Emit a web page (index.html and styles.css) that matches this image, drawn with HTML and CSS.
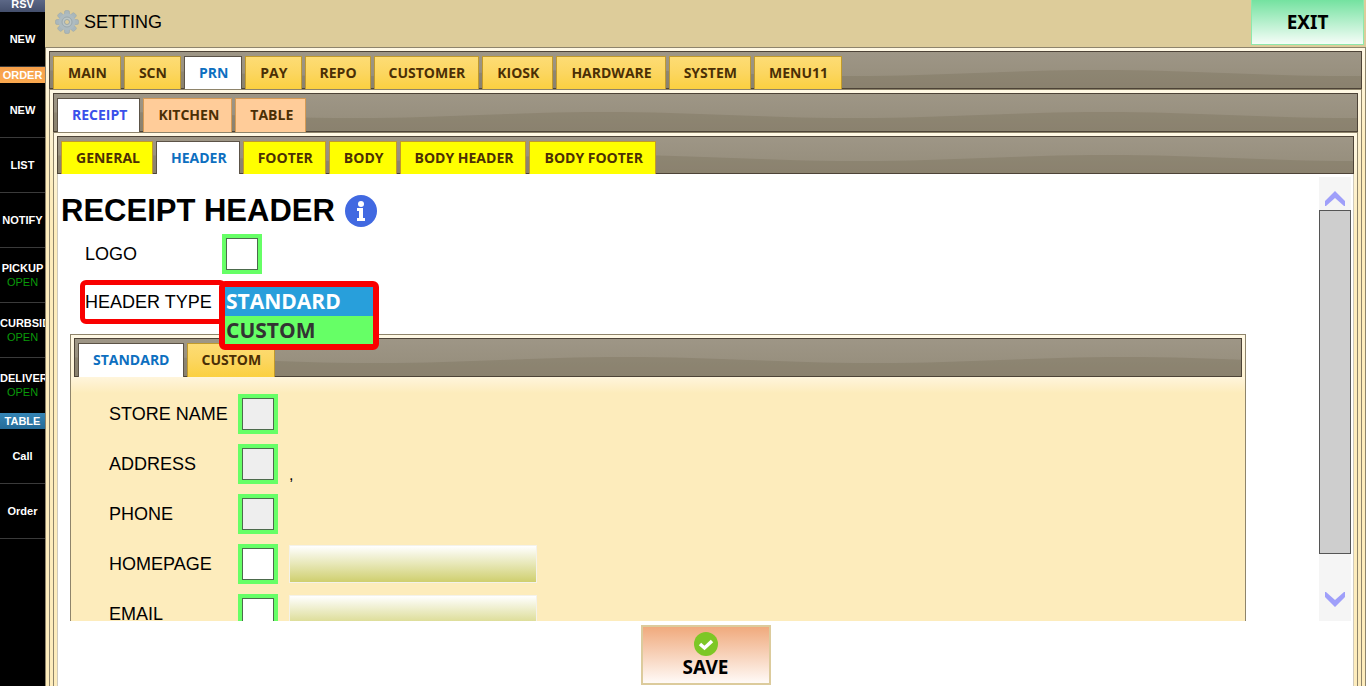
FILE: index.html
```
<!DOCTYPE html>
<html lang="en">
<head>
  <meta charset="utf-8">
  <title>Setting</title>
  <link rel="stylesheet" href="styles.css">
</head>
<body>

  <!-- Left menu -->
  <nav class="sidebar">
    <div class="side-label rsv">RSV</div>
    <button class="side-item">NEW</button>
    <div class="side-label order">ORDER</div>
    <button class="side-item">NEW</button>
    <button class="side-item">LIST</button>
    <button class="side-item">NOTIFY</button>
    <button class="side-item">PICKUP<span class="open">OPEN</span></button>
    <button class="side-item">CURBSIDE<span class="open">OPEN</span></button>
    <button class="side-item last">DELIVERY<span class="open">OPEN</span></button>
    <div class="side-label table">TABLE</div>
    <button class="side-item">Call</button>
    <button class="side-item">Order</button>
  </nav>

  <main class="main">
    <header class="topbar">
      <svg class="gear" viewBox="0 0 24 24">
        <g fill="#a9b7bc" stroke="#93a3aa" stroke-width="0.5">
          <rect x="9.5" y="0.5" width="5" height="23" rx="1.5"/>
          <rect x="9.5" y="0.5" width="5" height="23" rx="1.5" transform="rotate(45 12 12)"/>
          <rect x="9.5" y="0.5" width="5" height="23" rx="1.5" transform="rotate(90 12 12)"/>
          <rect x="9.5" y="0.5" width="5" height="23" rx="1.5" transform="rotate(135 12 12)"/>
        </g>
        <circle cx="12" cy="12" r="8.5" fill="#aebbc0"/>
        <circle cx="12" cy="12" r="5" fill="#bcc6c6" stroke="#9aa8ad"/>
        <circle cx="12" cy="12" r="2.5" fill="#ddcc9a" stroke="#9aa8ad"/>
      </svg>
      <h1>SETTING</h1>
      <button class="exit">EXIT</button>
    </header>

    <section class="panel">
      <div class="tabs">
        <button class="tab">MAIN</button>
        <button class="tab">SCN</button>
        <button class="tab active">PRN</button>
        <button class="tab">PAY</button>
        <button class="tab">REPO</button>
        <button class="tab">CUSTOMER</button>
        <button class="tab">KIOSK</button>
        <button class="tab">HARDWARE</button>
        <button class="tab">SYSTEM</button>
        <button class="tab">MENU11</button>
      </div>

      <section class="panel">
        <div class="tabs tabs-receipt">
          <button class="tab active">RECEIPT</button>
          <button class="tab">KITCHEN</button>
          <button class="tab">TABLE</button>
        </div>

        <section class="panel">
          <div class="tabs tabs-section">
            <button class="tab">GENERAL</button>
            <button class="tab active">HEADER</button>
            <button class="tab">FOOTER</button>
            <button class="tab">BODY</button>
            <button class="tab">BODY HEADER</button>
            <button class="tab">BODY FOOTER</button>
          </div>

          <div class="content">
            <div class="scroll-area">
              <div class="page">
                <h2>RECEIPT HEADER
                  <svg class="info" viewBox="0 0 32 32">
                    <circle cx="16" cy="16" r="16" fill="#4169e1"/>
                    <circle cx="16" cy="9" r="3" fill="#fff"/>
                    <path d="M12 13h6v10h2v3h-8v-3h2v-7h-2z" fill="#fff"/>
                  </svg>
                </h2>

                <div class="row">
                  <label for="logo">LOGO</label>
                  <input type="checkbox" id="logo">
                </div>

                <div class="row type-row">
                  <label class="marked" for="headerType">HEADER TYPE</label>
                  <select id="headerType" size="2">
                    <option selected>STANDARD</option>
                    <option>CUSTOM</option>
                  </select>
                </div>

                <section class="panel sub-panel">
                  <div class="tabs tabs-type">
                    <button class="tab active">STANDARD</button>
                    <button class="tab">CUSTOM</button>
                  </div>
                  <div class="fields">
                    <label for="storeName">STORE NAME</label>
                    <input type="checkbox" id="storeName" disabled>
                    <span></span>
                    <label for="address">ADDRESS</label>
                    <input type="checkbox" id="address" disabled>
                    <span class="value">,</span>
                    <label for="phone">PHONE</label>
                    <input type="checkbox" id="phone" disabled>
                    <span></span>
                    <label for="homepage">HOMEPAGE</label>
                    <input type="checkbox" id="homepage">
                    <input type="text" aria-label="Homepage">
                    <label for="email">EMAIL</label>
                    <input type="checkbox" id="email">
                    <input type="text" aria-label="Email">
                  </div>
                </section>
              </div>

              <div class="scrollbar">
                <button class="arrow up" aria-label="Scroll up">
                  <svg viewBox="0 0 20 15"><path d="M0 10L10 0l10 10v5h-1l-9-8-9 8H0z" fill="#9f9ffa"/></svg>
                </button>
                <div class="track"><div class="thumb"></div></div>
                <button class="arrow down" aria-label="Scroll down">
                  <svg viewBox="0 0 20 15"><path d="M0 5l10 10L20 5V0h-1l-9 8-9-8H0z" fill="#9f9ffa"/></svg>
                </button>
              </div>
            </div>

            <footer class="actions">
              <button class="save">
                <svg viewBox="0 0 24 24">
                  <circle cx="12" cy="12" r="12" fill="#7dc726"/>
                  <path d="M6 12l4.500 4L18 9" fill="none" stroke="#fff" stroke-width="3.500"/>
                </svg>
                SAVE
              </button>
            </footer>
          </div>
        </section>
      </section>
    </section>
  </main>

</body>
</html>
```
FILE: styles.css
```
* {
  box-sizing: border-box;
}

body {
  margin: 0;
  height: 100vh;
  display: flex;
  overflow: hidden;
  background: #000;
  color: #000;
  font-family: "Liberation Sans", Arial, sans-serif;
  font-size: 18px;
}

button {
  margin: 0;
  padding: 0;
  border: 0;
  font-family: inherit;
  white-space: nowrap;
  cursor: pointer;
}

/* Left menu */
.sidebar {
  flex: 0 0 45px;
  overflow: hidden;
  display: flex;
  flex-direction: column;
  color: #fff;
  font-size: 11px;
  font-weight: bold;
}

.side-label {
  flex: none;
  height: 16px;
  line-height: 16px;
  text-align: center;
}

.side-label.rsv {
  margin-top: -4px;
  background: linear-gradient(#64708f, #444f6c);
}

.side-label.order {
  background: linear-gradient(#f6a04a, #fba94f);
}

.side-label.table {
  background: linear-gradient(#3585b5, #256b98);
}

.side-item {
  flex: none;
  height: 55px;
  display: flex;
  flex-direction: column;
  align-items: safe center;
  justify-content: center;
  background: #000;
  border-bottom: 1px solid #3a3a3a;
  color: #fff;
  font-size: 11px;
  font-weight: bold;
  line-height: 14px;
}

.side-item.last {
  border-bottom-color: #000;
}

.open {
  color: #0a9a0a;
  font-weight: normal;
}

/* Title bar */
.main {
  flex: 1;
  min-width: 0;
  display: flex;
  flex-direction: column;
}

.topbar {
  flex: 0 0 47px;
  display: flex;
  align-items: flex-start;
  padding: 0 2px 0 10px;
  background: #ddcc9a;
}

.gear {
  width: 24px;
  height: 24px;
  margin-top: 10px;
}

.topbar h1 {
  flex: 1;
  margin: 0 0 0 5px;
  font-size: 18px;
  font-weight: normal;
  line-height: 44px;
}

.exit {
  width: 113px;
  height: 45px;
  border: 1px solid #8ee8ac;
  border-top: 0;
  background: linear-gradient(#74e2a0, #f6fdf8);
  font-family: "Noto Sans", "Open Sans", sans-serif;
  font-size: 19px;
  font-weight: bold;
  line-height: 40px;
}

/* Nested tab panels */
.panel {
  flex: 1;
  min-height: 0;
  display: flex;
  flex-direction: column;
  border: 1px solid #8e846b;
  border-bottom: 0;
  padding: 3px 3px 0;
  background: linear-gradient(#fff8e4, #fdecbc 100px);
}

.tabs {
  flex: 0 0 38px;
  display: flex;
  align-items: flex-end;
  gap: 3px;
  padding: 0 3px;
  border: 1px solid #4d4337;
  background: url("data:image/svg+xml,%3Csvg xmlns='http://www.w3.org/2000/svg' width='500' height='38'%3E%3Cpath d='M0 24C100 24 150 18 250 18S400 24 500 24V38H0z' fill='%23766c54' fill-opacity='.3'/%3E%3C/svg%3E") 300px 0 repeat-x, linear-gradient(#9e9686, #948c7a);
}

.tabs-receipt,
.tabs-type {
  flex-basis: 39px;
}

.tab {
  height: 33px;
  margin-bottom: -1px;
  padding: 0 13px 2px 14px;
  border: 1px solid #c19a2c;
  border-bottom: 0;
  background: linear-gradient(#fddc75, #fcd660 50%, #fbd040);
  color: #4b2f05;
  font-family: "Open Sans", "Noto Sans", sans-serif;
  font-size: 14px;
  font-weight: bold;
}

.tabs-receipt .tab {
  height: 34px;
  padding-right: 12px;
  background: #ffcc99;
  border-color: #d59a55;
}

.tabs-section .tab {
  padding-right: 12px;
  background: #ffff00;
}

.tabs-type .tab {
  height: 34px;
}

.tabs .tab.active {
  background: #fff;
  border-color: #5c5347;
  color: #0d6fc0;
}

.tabs-receipt .tab.active {
  color: #3a50ea;
}

/* Settings page */
.content {
  flex: 1;
  min-height: 0;
  display: flex;
  flex-direction: column;
  border: 1px solid #cfcabd;
  border-width: 0 1px;
  background: #fff;
}

.scroll-area {
  flex: 1;
  min-height: 0;
  display: flex;
  padding: 3px 2px 0 0;
}

.page {
  flex: 1;
  min-width: 0;
  overflow: hidden;
}

.page h2 {
  display: flex;
  align-items: center;
  gap: 10px;
  height: 57px;
  margin: 0;
  padding: 11px 0 0 3px;
  font-size: 31px;
}

.info {
  width: 32px;
  height: 32px;
}

.row {
  display: flex;
  align-items: center;
  height: 40px;
  padding-left: 27px;
}

.row label {
  width: 137px;
}

input[type="checkbox"] {
  appearance: none;
  width: 40px;
  height: 40px;
  margin: 0;
  border: 4px solid #66ff66;
  outline: 1px solid #4c6a4c;
  outline-offset: -5px;
  background: #fff;
}

input[type="checkbox"]:disabled {
  background: #eee;
}

.type-row {
  position: relative;
  height: 44px;
  margin: 6px 0 10px;
  padding-left: 22px;
}

.row .marked {
  width: 146px;
  height: 44px;
  border: 5px solid #f90000;
  border-radius: 6px;
  line-height: 34px;
  white-space: nowrap;
}

/* the open list lies over the tabs below it */
#headerType {
  position: absolute;
  top: 1px;
  left: 161px;
  z-index: 1;
  width: 160px;
  height: 69px;
  padding: 0;
  overflow: hidden;
  border: 6px solid #f90000;
  border-radius: 6px;
  outline: none;
  background: #66ff66;
  color: #333;
  font-family: "Open Sans", "Noto Sans", sans-serif;
  font-size: 21px;
}

#headerType option {
  height: 29px;
  min-height: 29px;
  padding: 0 1px;
  font-weight: bold;
  line-height: 29px;
}

#headerType option:checked {
  background: #289fdb linear-gradient(#289fdb, #289fdb);
  color: #fff;
}

.page .sub-panel {
  margin: 0 73px 0 12px;
}

.fields {
  display: grid;
  grid-template-columns: 129px 40px 248px;
  grid-auto-rows: 40px;
  row-gap: 10px;
  align-items: center;
  margin: 0 -3px;
  padding: 17px 38px;
  background: linear-gradient(#fff5dc, #fdecbc 16px);
}

.fields > :nth-child(3n) {
  margin-left: 11px;
}

.fields .value {
  align-self: end;
  font-size: 16px;
}

input[type="text"] {
  width: 248px;
  height: 38px;
  border: 1px solid #f4f2ea;
  background: linear-gradient(#fff, #cfcf6e);
  font: inherit;
}

/* Scrollbar */
.scrollbar {
  flex: 0 0 32px;
  display: flex;
  flex-direction: column;
  background: #f5f5f5;
}

.arrow {
  flex: 0 0 33px;
  display: flex;
  justify-content: center;
  background: none;
}

.arrow svg {
  width: 20px;
  height: 15px;
}

.arrow.up {
  align-items: flex-end;
  padding-bottom: 4px;
}

.arrow.down {
  align-items: flex-start;
  padding-top: 4px;
}

.track {
  flex: 1;
}

.thumb {
  height: 91%;
  border: 1px solid #555;
  background: #cecece;
}

/* Bottom bar */
.actions {
  flex: 0 0 65px;
  display: flex;
  justify-content: center;
  align-items: flex-start;
  padding-top: 4px;
}

.save {
  width: 130px;
  height: 60px;
  display: flex;
  flex-direction: column;
  align-items: center;
  border: 2px solid #dccb9c;
  padding-top: 5px;
  background: linear-gradient(#f0aa7d, #fffaf7);
  font-family: "Noto Sans", "Open Sans", sans-serif;
  font-size: 19px;
  font-weight: bold;
  line-height: 23px;
}

.save svg {
  width: 24px;
  height: 24px;
}
```
